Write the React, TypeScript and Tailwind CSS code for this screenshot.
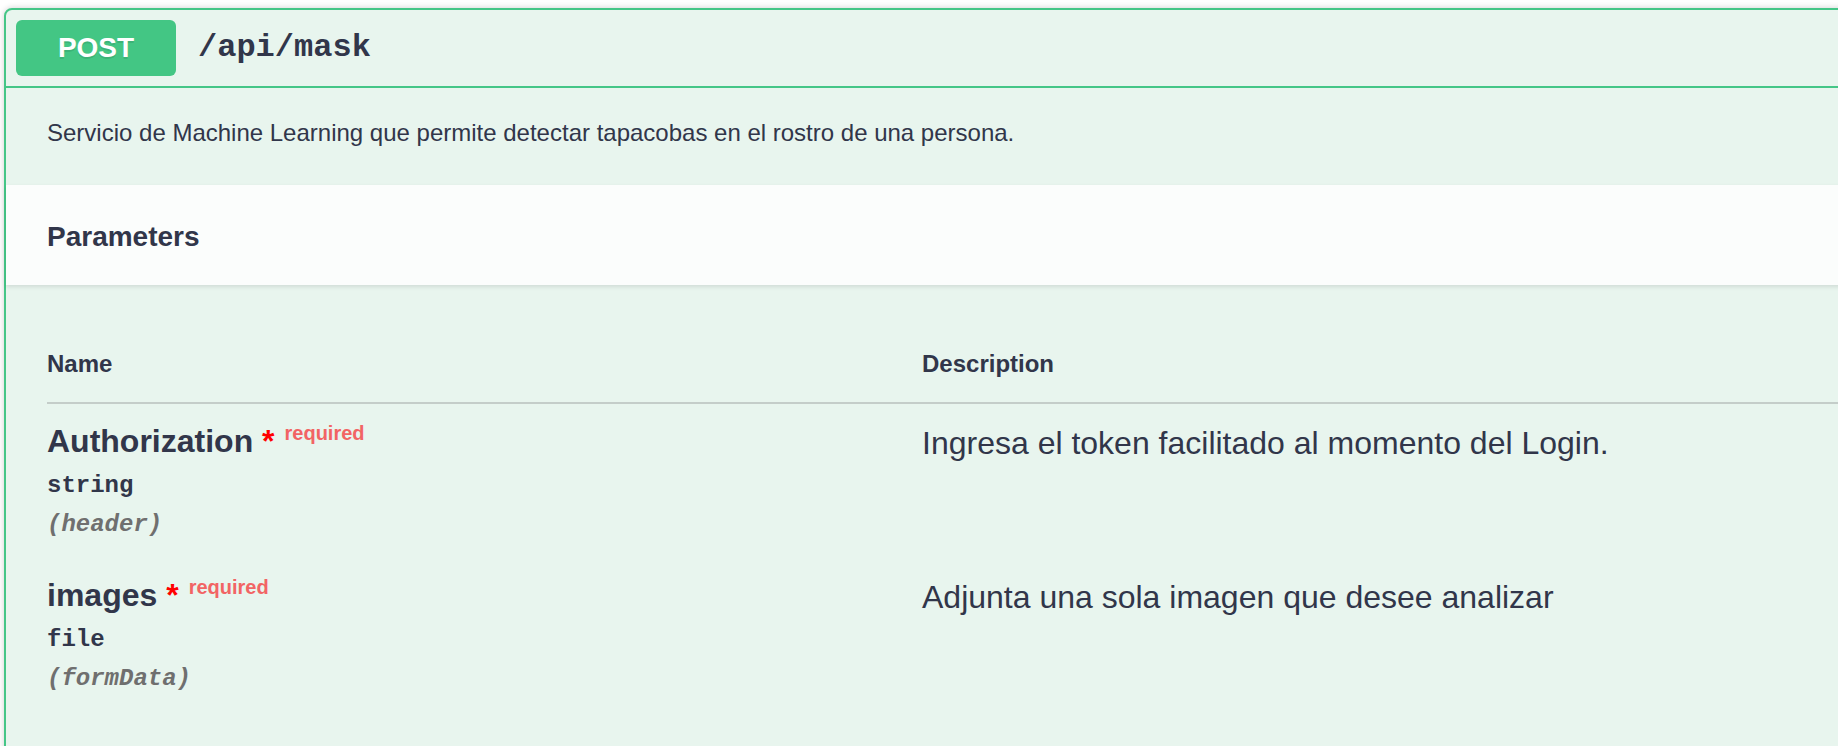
import React from "react";

const SANS = "font-['Liberation_Sans',Arial,Helvetica,sans-serif]";
const MONO = "font-['Liberation_Mono','Courier_New',Courier,monospace]";

type Param = {
  name: string;
  type: string;
  place: string;
  description: string;
};

const params: Param[] = [
  {
    name: "Authorization",
    type: "string",
    place: "(header)",
    description: "Ingresa el token facilitado al momento del Login.",
  },
  {
    name: "images",
    type: "file",
    place: "(formData)",
    description: "Adjunta una sola imagen que desee analizar",
  },
];

function ParamRow({ p }: { p: Param }) {
  return (
    <div className="flex pt-[19px] pb-[19px]">
      <div className="w-[875px] shrink-0">
        <div className={`${SANS} text-[32px] leading-[36px] font-bold text-[#31364a] whitespace-nowrap`}>
          {p.name}
          <span className="text-[#ff0000]">&nbsp;*</span>
          <span className="relative top-[-12px] pl-[10px] text-[20px] font-bold text-[#f26464]">required</span>
        </div>
        <div className={`${MONO} pt-[9px] text-[24px] leading-[28px] font-bold text-[#31364a]`}>{p.type}</div>
        <div className={`${MONO} pt-[11px] text-[24px] leading-[28px] font-bold italic text-[#6f6f6f]`}>{p.place}</div>
      </div>
      <div className={`${SANS} pt-[2px] text-[32px] leading-[36px] text-[#31364a] whitespace-nowrap`}>{p.description}</div>
    </div>
  );
}

export default function App() {
  return (
    <div className="w-[1838px] h-[746px] overflow-hidden bg-white pt-[8px] pl-[4px]">
      <div className="w-[1900px] h-[800px] rounded-[8px] border-2 border-[#45c687] bg-[#e8f5ee] shadow-[0_0_6px_rgba(0,0,0,0.19)]">
        {/* Summary */}
        <div className="flex items-center h-[78px] px-[10px] border-b-2 border-[#45c687]">
          <div className={`${SANS} w-[160px] h-[56px] rounded-[6px] bg-[#43c684] flex items-center justify-center text-white text-[28px] font-bold [text-shadow:0_2px_0_rgba(0,0,0,0.1)]`}>
            POST
          </div>
          <div className={`${MONO} pl-[22px] text-[32px] font-bold text-[#31364a]`}>/api/mask</div>
        </div>

        {/* Description */}
        <div className="pt-[31px] pb-[38px] pl-[41px]">
          <p className={`${SANS} text-[24px] leading-[28px] text-[#31364a]`}>
            Servicio de Machine Learning que permite detectar tapacobas en el rostro de una persona.
          </p>
        </div>

        {/* Section header */}
        <div className="h-[100px] flex items-center pt-[4px] pl-[41px] bg-[#fbfdfc] shadow-[0_2px_4px_rgba(0,0,0,0.1)]">
          <h4 className={`${SANS} text-[28px] font-bold text-[#31364a]`}>Parameters</h4>
        </div>

        {/* Table */}
        <div className="pt-[41px] pl-[41px]">
          <div className="flex border-b-2 border-[#c4cdc9] pt-[24px] pb-[24px]">
            <div className={`${SANS} w-[875px] shrink-0 text-[24px] leading-[28px] font-bold text-[#31364a]`}>Name</div>
            <div className={`${SANS} text-[24px] leading-[28px] font-bold text-[#31364a]`}>Description</div>
          </div>
          {params.map((p) => (
            <ParamRow key={p.name} p={p} />
          ))}
        </div>
      </div>
    </div>
  );
}
